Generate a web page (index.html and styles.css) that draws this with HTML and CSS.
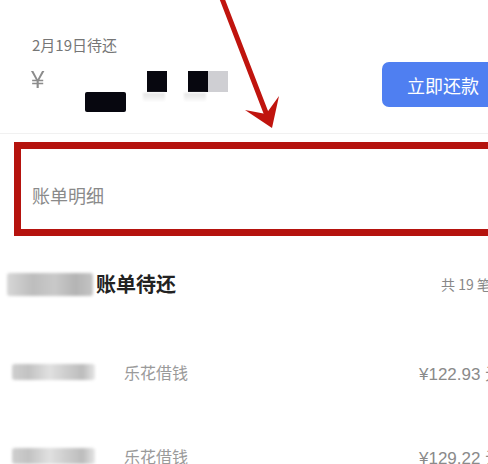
FILE: index.html
```html
<!DOCTYPE html>
<html lang="zh-CN">
<head>
<meta charset="utf-8">
<link rel="stylesheet" href="styles.css">
</head>
<body>
<div class="page">
  <section class="summary">
    <div class="due-label">2月19日待还</div>
    <div class="amount-row">
      <div class="amount">
        <span class="yen">¥</span>
        <span class="mask mask-wide"></span>
        <span class="mask mask-sq"><span class="mask-drip"></span></span>
        <span class="mask mask-sq mask-pair"><span class="mask-drip"></span></span>
        <span class="mask mask-light"></span>
      </div>
      <button class="pay-btn">立即还款</button>
    </div>
  </section>

  <section class="detail-box">
    <div class="detail-label">账单明细</div>
  </section>

  <section class="pending">
    <div class="pending-head">
      <div class="pending-title"><span class="blur blur-title"></span><span class="title-text">账单待还</span></div>
      <div class="pending-count">共 19 笔</div>
    </div>
    <div class="bill-row">
      <span class="blur blur-date"></span>
      <span class="bill-name">乐花借钱</span>
      <span class="bill-amount">¥122.93 元</span>
    </div>
    <div class="bill-row">
      <span class="blur blur-date"></span>
      <span class="bill-name">乐花借钱</span>
      <span class="bill-amount">¥129.22 元</span>
    </div>
  </section>

  <svg class="arrow" width="488" height="140" viewBox="0 0 488 140">
    <line x1="221" y1="-4" x2="268" y2="118" stroke="#c0140e" stroke-width="5" stroke-linecap="round"/>
    <polygon points="272,128 245,110 266,114 279,96" fill="#c0140e"/>
  </svg>
</div>
</body>
</html>
```
FILE: styles.css
```css
* { box-sizing: border-box; }
html, body { margin: 0; padding: 0; background: #fff; }
body {
  font-family: "Noto Sans CJK SC", "Noto Sans", sans-serif;
  width: 488px;
  height: 464px;
  overflow: hidden;
}
.page {
  position: relative;
  width: 488px;
  height: 464px;
  overflow: hidden;
}

.summary {
  height: 134px;
  padding: 35px 0 0 32px;
  border-bottom: 1px solid #f1f1f1;
}
.due-label {
  font-size: 15px;
  line-height: 20px;
  color: #767676;
}
.amount-row {
  display: flex;
  align-items: flex-start;
  margin-top: 7px;
  height: 45px;
}
.amount {
  display: flex;
  align-items: flex-start;
  height: 45px;
}
.yen {
  font-family: "Liberation Sans", sans-serif;
  font-size: 24px;
  line-height: 28px;
  color: #8c8c8c;
  margin-top: 4px;
  width: 14px;
  margin-left: -1px;
  filter: blur(0.4px);
}
.mask {
  display: block;
  background: #07070f;
  filter: blur(0.6px);
}
.mask-wide {
  width: 41px;
  height: 20px;
  margin: 30px 0 0 40px;
  border-radius: 2px;
}
.mask-sq {
  position: relative;
  width: 20px;
  height: 21px;
  margin: 9px 0 0 21px;
}
.mask-pair { margin-left: 21px; }
.mask-drip {
  position: absolute;
  left: -4px;
  top: 22px;
  width: 22px;
  height: 8px;
  background: linear-gradient(#e4e4e4, #fafafa);
  filter: blur(1px);
}
.mask-light {
  width: 20px;
  height: 21px;
  margin-top: 9px;
  background: #cfcfd3;
}
.pay-btn {
  margin-left: auto;
  margin-right: -14px;
  width: 120px;
  height: 45px;
  border: none;
  border-radius: 7px;
  background: #4f7ff1;
  color: #fff;
  font-family: "Noto Sans CJK SC", sans-serif;
  font-size: 18px;
  padding: 0 0 0 25px;
  text-align: left;
}

.detail-box {
  margin: 8px 0 0 14px;
  width: 500px;
  height: 94px;
  border: 7px solid #b5130e;
  padding: 34px 0 0 11px;
}
.detail-label {
  font-size: 18px;
  line-height: 24px;
  color: #8a8a8a;
}

.pending { padding-top: 34px; }
.pending-head {
  display: flex;
  align-items: center;
  height: 28px;
}
.pending-title {
  display: flex;
  align-items: center;
}
.blur {
  display: block;
  filter: blur(1.5px);
  border-radius: 3px;
}
.blur-title {
  width: 86px;
  height: 23px;
  margin-left: 7px;
  background: linear-gradient(90deg, #d6d6d6, #bdbdbd 30%, #c9c9c9 55%, #b4b4b4 80%, #c4c4c4);
}
.title-text {
  margin-left: 3px;
  font-size: 20px;
  font-weight: bold;
  color: #222;
  line-height: 28px;
}
.pending-count {
  margin-left: auto;
  margin-right: -14px;
  width: 61px;
  white-space: nowrap;
  font-size: 14px;
  color: #888;
}

.bill-row {
  display: flex;
  align-items: center;
  height: 28px;
  margin-top: 60px;
}
.bill-row + .bill-row { margin-top: 56px; }
.blur-date {
  width: 83px;
  height: 16px;
  margin-left: 12px;
  background: linear-gradient(90deg, #cfcfcf, #c2c2c2 20%, #e0e0e0 45%, #c9c9c9 70%, #bcbcbc 85%, #e6e6e6);
}
.bill-name {
  margin-left: 29px;
  font-size: 16px;
  color: #9a9a9a;
}
.bill-amount {
  margin-left: auto;
  margin-right: -30px;
  width: 99px;
  white-space: nowrap;
  font-family: "Liberation Sans", sans-serif;
  font-size: 17px;
  color: #8a8a8a;
}

.arrow {
  position: absolute;
  left: 0;
  top: 0;
  pointer-events: none;
}
```
